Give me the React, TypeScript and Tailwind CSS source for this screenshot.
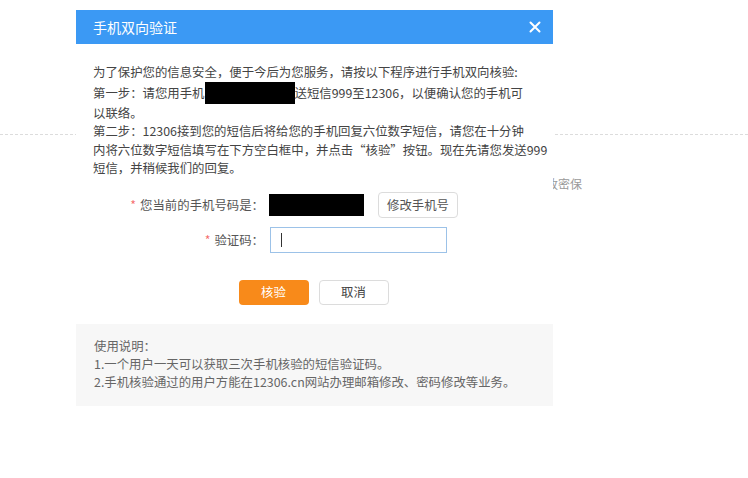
import React from "react";

const FONT = { fontFamily: '"Microsoft YaHei", "Noto Sans CJK SC", "Noto Sans", sans-serif' };

export default function App() {
  return (
    <div className="relative w-[748px] h-[478px] bg-white overflow-hidden" style={FONT}>
      {/* background page */}
      <div className="pt-[134px]">
        <div className="border-t border-dashed border-[#dcdcdc]" />
        <div className="mt-[40px] pl-[534px] text-[12px] leading-[18px] text-[#9a9a9a]">修改密保</div>
      </div>

      {/* modal */}
      <div className="absolute left-[76px] top-[10px] w-[477px] bg-white">
        <div className="h-[34px] bg-[#3b99f4] flex items-center justify-between pl-[17px] pr-[12px]">
          <span className="text-white text-[14px]">手机双向验证</span>
          <svg width="12" height="12" viewBox="0 0 12 12">
            <path d="M1.5 1.5 L10.5 10.5 M10.5 1.5 L1.5 10.5" stroke="white" strokeWidth="2" strokeLinecap="round" />
          </svg>
        </div>

        <div className="pt-[19px] pl-[17px] text-[12.4px] leading-[18.6px] text-[#444] whitespace-nowrap">
          <div>为了保护您的信息安全，便于今后为您服务，请按以下程序进行手机双向核验:</div>
          <div className="relative">
            第一步：请您用手机
            <span className="inline-block w-[90px] h-[22px] bg-black align-[-6px]" />
            送短信999至12306，以便确认您的手机可
          </div>
          <div>以联络。</div>
          <div>第二步：12306接到您的短信后将给您的手机回复六位数字短信，请您在十分钟</div>
          <div>内将六位数字短信填写在下方空白框中，并点击“核验”按钮。现在先请您发送999</div>
          <div>短信，并稍候我们的回复。</div>
        </div>

        <div className="mt-[14px] flex flex-col gap-[9px] text-[12.4px] text-[#555]">
          <div className="flex items-center h-[26px]">
            <div className="w-[193px] text-right pr-[5px]">
              <span className="text-[#f56c6c] mr-[4px]">*</span>您当前的手机号码是：
            </div>
            <div className="w-[95px] h-[22px] bg-black" />
            <button className="ml-[14px] w-[80px] h-[26px] border border-[#dcdcdc] rounded-[4px] bg-white text-[#555] text-[12.4px]">
              修改手机号
            </button>
          </div>
          <div className="flex items-center h-[26px]">
            <div className="w-[193px] text-right pr-[5px]">
              <span className="text-[#f56c6c] mr-[4px]">*</span>验证码：
            </div>
            <div className="ml-[1px] w-[177px] h-[26px] border border-[#9cc2e8] flex items-center pl-[10px]">
              <div className="w-px h-[14px] bg-[#333]" />
            </div>
          </div>
        </div>

        <div className="mt-[27px] flex justify-center">
          <div className="flex gap-[10px] ml-[-2px]">
            <button className="w-[70px] h-[25px] rounded-[4px] bg-[#f88a1a] text-white text-[12.4px]">核验</button>
            <button className="w-[70px] h-[25px] rounded-[4px] border border-[#dcdcdc] bg-white text-[#444] text-[12.4px]">取消</button>
          </div>
        </div>

        <div className="mt-[19px] bg-[#f7f7f7] pt-[13px] pb-[15px] pl-[18px] text-[12.4px] leading-[18px] text-[#666] whitespace-nowrap">
          <div>使用说明：</div>
          <div>1.一个用户一天可以获取三次手机核验的短信验证码。</div>
          <div>2.手机核验通过的用户方能在12306.cn网站办理邮箱修改、密码修改等业务。</div>
        </div>
      </div>
    </div>
  );
}
